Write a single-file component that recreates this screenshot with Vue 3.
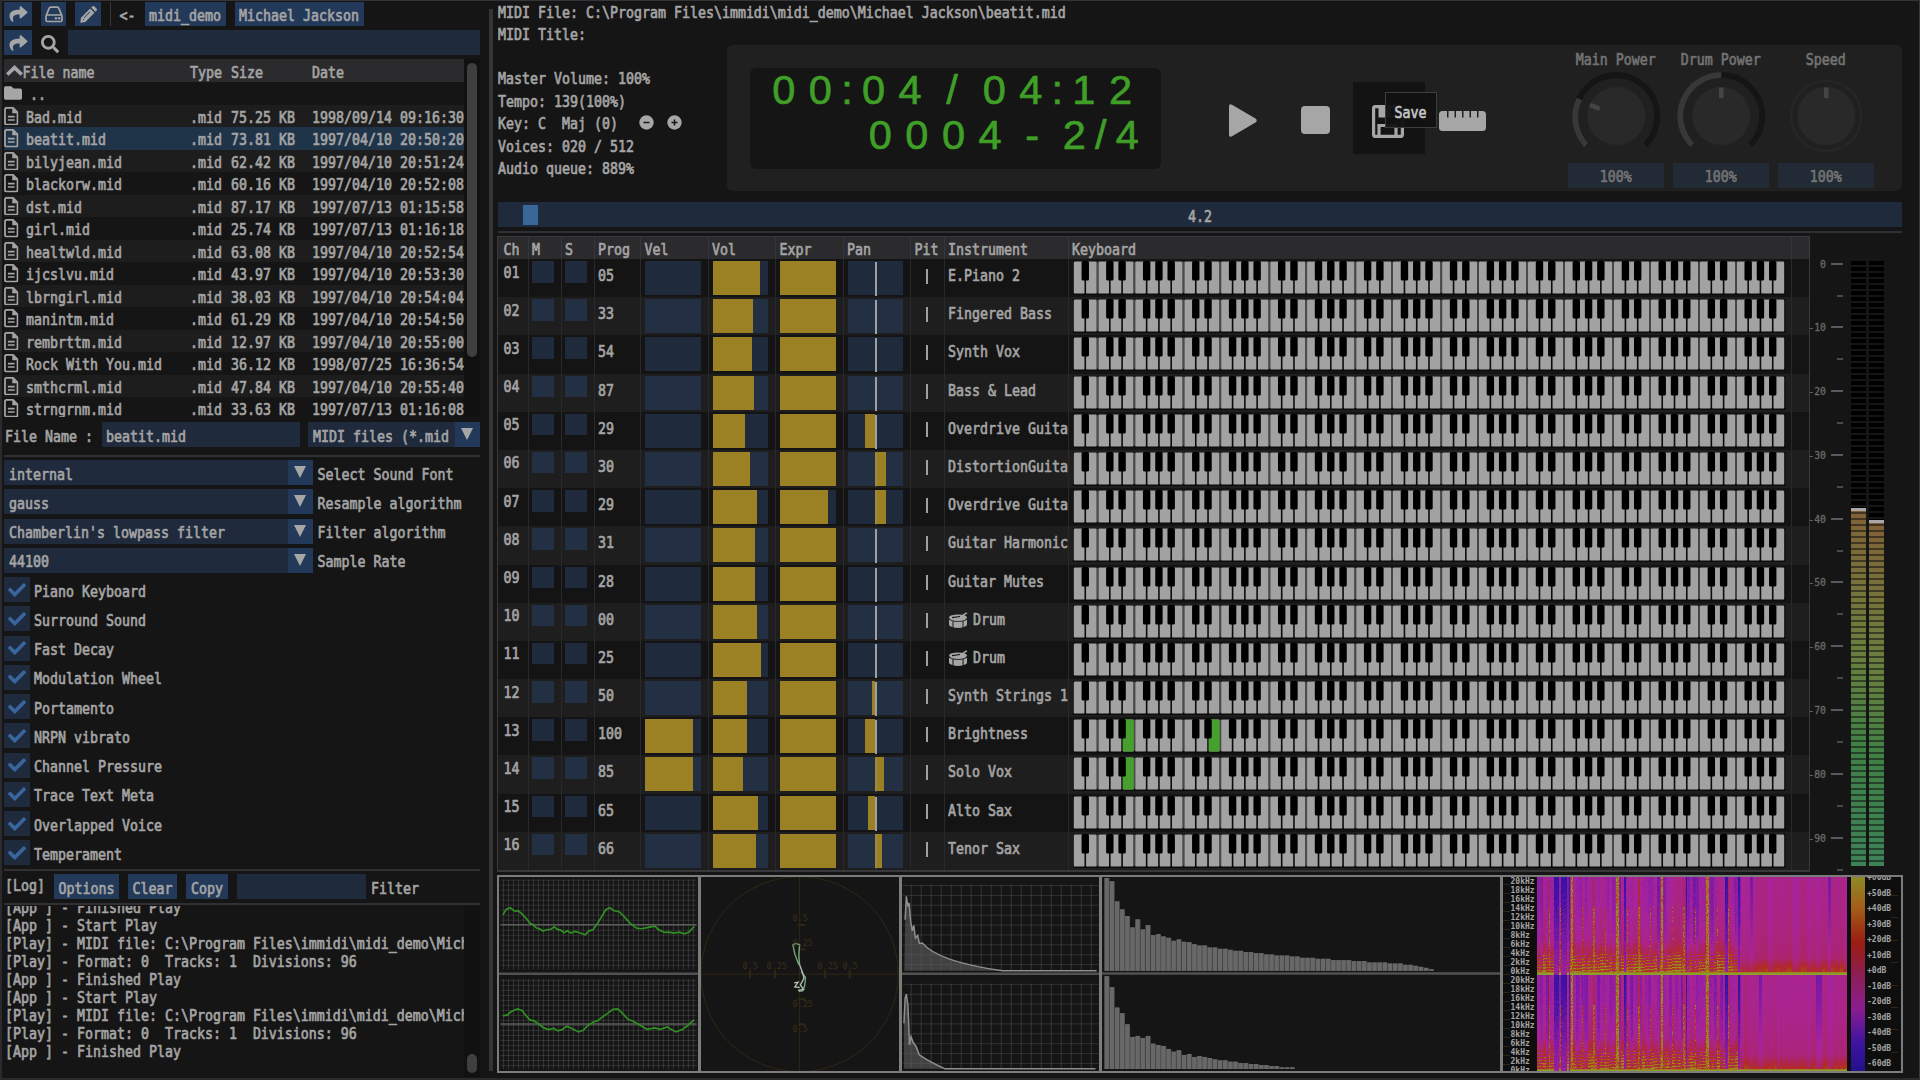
<script setup>
import { h, ref, onMounted } from 'vue'

const T = (props, { slots }) => h('span', { class: 't' }, slots.default && slots.default())

const files = [
  ['Bad.mid', '75.25 KB', '1998/09/14 09:16:30'],
  ['beatit.mid', '73.81 KB', '1997/04/10 20:50:20'],
  ['bilyjean.mid', '62.42 KB', '1997/04/10 20:51:24'],
  ['blackorw.mid', '60.16 KB', '1997/04/10 20:52:08'],
  ['dst.mid', '87.17 KB', '1997/07/13 01:15:58'],
  ['girl.mid', '25.74 KB', '1997/07/13 01:16:18'],
  ['healtwld.mid', '63.08 KB', '1997/04/10 20:52:54'],
  ['ijcslvu.mid', '43.97 KB', '1997/04/10 20:53:30'],
  ['lbrngirl.mid', '38.03 KB', '1997/04/10 20:54:04'],
  ['manintm.mid', '61.29 KB', '1997/04/10 20:54:50'],
  ['rembrttm.mid', '12.97 KB', '1997/04/10 20:55:00'],
  ['Rock With You.mid', '36.12 KB', '1998/07/25 16:36:54'],
  ['smthcrml.mid', '47.84 KB', '1997/04/10 20:55:40'],
  ['strngrnm.mid', '33.63 KB', '1997/07/13 01:16:08'],
]
const combos = [
  ['internal', 'Select Sound Font'],
  ['gauss', 'Resample algorithm'],
  ["Chamberlin's lowpass filter", 'Filter algorithm'],
  ['44100', 'Sample Rate'],
]
const checks = ['Piano Keyboard', 'Surround Sound', 'Fast Decay', 'Modulation Wheel', 'Portamento', 'NRPN vibrato', 'Channel Pressure', 'Trace Text Meta', 'Overlapped Voice', 'Temperament']
const midiLine = '[Play] - MIDI file: C:\\Program Files\\immidi\\midi_demo\\Mich'
const fmtLine = '[Play] - Format: 0  Tracks: 1  Divisions: 96'
const log = ['[App ] - Finished Play', '[App ] - Start Play', midiLine, fmtLine, '[App ] - Finished Play', '[App ] - Start Play', midiLine, fmtLine, '[App ] - Finished Play']
const info = ['Master Volume: 100%', 'Tempo: 139(100%)', 'Key: C  Maj (0)', 'Voices: 020 / 512', 'Audio queue: 889%']

const glyphs = (s, gap) => [...s].map((c) => ({ c, w: c === ':' ? 16.5 : c === '/' ? gap : c === '-' ? 47.5 : 36.6 }))
const lcd1 = glyphs('00:04/04:12', 47.5)
const lcd2 = glyphs('0004-2/4', 16.5)

const knobs = [
  { name: 'Main Power', tick: -67, arc: 'M18.4 74.1A41 41 0 0 1 11.4 28' },
  { name: 'Drum Power', tick: 0, arc: 'M19.3 74A41 41 0 0 1 48.3 4' },
  { name: 'Speed', tick: 0, arc: null },
]

// [program, velocity, volume, expression, pan, instrument, pressed keys]
const channels = [
  ['05', 0, 0.855, 1, 0, 'E.Piano 2', []],
  ['33', 0, 0.735, 1, 0, 'Fingered Bass', []],
  ['54', 0, 0.71, 1, 0, 'Synth Vox', []],
  ['87', 0, 0.755, 1, 0, 'Bass & Lead', []],
  ['29', 0, 0.59, 1, -0.19, 'Overdrive Guita', []],
  ['30', 0, 0.67, 1, 0.19, 'DistortionGuita', []],
  ['29', 0, 0.81, 0.86, 0.2, 'Overdrive Guita', []],
  ['31', 0, 0.77, 1, 0, 'Guitar Harmonic', []],
  ['28', 0, 0.77, 1, 0, 'Guitar Mutes', []],
  ['00', 0, 0.81, 1, 0, 'Drum', []],
  ['25', 0, 0.87, 1, 0, 'Drum', []],
  ['50', 0, 0.63, 1, -0.05, 'Synth Strings 1', []],
  ['100', 0.86, 0.63, 1, -0.19, 'Brightness', [4, 11]],
  ['85', 0.86, 0.55, 1, 0.165, 'Solo Vox', [4]],
  ['65', 0, 0.82, 1, -0.13, 'Alto Sax', []],
  ['66', 0, 0.775, 1, 0.125, 'Tenor Sax', []],
].map((r, i) => ({ ch: String(i + 1).padStart(2, '0'), prog: r[0], vel: r[1], vol: r[2], expr: r[3], pan: r[4], inst: r[5], keys: r[6] }))
const heads = ['Ch', 'M', 'S', 'Prog', 'Vel', 'Vol', 'Expr', 'Pan', 'Pit', 'Instrument', 'Keyboard', '']

const KEY = 712 / 58
const whites = Array.from({ length: 58 }, (_, i) => i)
// keys start at A: a gap without a black key falls after every B and E
const blacks = whites.filter((i) => i > 0 && ![2, 5].includes(i % 7))

const scale = Array.from({ length: 10 }, (_, i) => (i ? `-${i * 10}` : '0'))
const khz = Array.from({ length: 11 }, (_, i) => `${20 - i * 2}kHz`)
const db = Array.from({ length: 13 }, (_, i) => { const v = 60 - i * 10; return `${v >= 0 ? '+' : ''}${v}dB` })

const bars1 = [278, 268, 208, 184, 164, 130, 154, 124, 137, 107, 110, 103, 99, 90, 94, 87, 86, 80, 76, 76, 70, 70, 66, 66, 63, 60, 60, 56, 56, 53, 53, 49, 49, 46, 46, 46, 43, 43, 39, 39, 39, 36, 36, 36, 32, 32, 32, 32, 29, 29, 29, 25, 25, 25, 25, 22, 22, 22, 18, 18, 15, 12, 9, 5]
const bars2 = [278, 245, 184, 167, 134, 96, 99, 93, 99, 76, 72, 69, 60, 52, 56, 42, 45, 36, 39, 36, 33, 29, 26, 26, 22, 22, 18, 18, 15, 15, 12, 12, 9, 9, 5, 5, 5]

const canvas = ref(null)
const stops = [[0, 34, 16, 160], [0.2, 60, 18, 165], [0.38, 130, 26, 165], [0.5, 168, 36, 156], [0.62, 172, 36, 110], [0.74, 178, 40, 40], [0.84, 172, 70, 28], [0.93, 160, 130, 30], [1.1, 138, 160, 44]]
function color(v) {
  v = Math.max(0, Math.min(1.09, v))
  let i = 1
  while (stops[i][0] < v) i++
  const a = stops[i - 1], b = stops[i], f = (v - a[0]) / (b[0] - a[0])
  return [1, 2, 3].map((k) => a[k] + (b[k] - a[k]) * f)
}
onMounted(() => {
  const W = 310, H = 195
  const ctx = canvas.value.getContext('2d')
  const img = ctx.createImageData(W, H)
  let s = 7
  const rnd = () => ((s = (s * 1664525 + 1013904223) >>> 0) / 4294967296)
  for (const [y0, y1] of [[0, 98], [98, 195]]) {
    let slow = 0
    for (let x = 0; x < W; x++) {
      const right = x > 203
      if (x % 3 === 0) slow = rnd() - 0.5
      const jit = (rnd() - 0.5) * 0.05
      const strong = [34, 35, 79, 80, 81, 124, 125, 169, 170, 171].includes(x)
      const weak = [12, 56, 57, 101, 102, 146, 147, 191].includes(x)
      const minor = [23, 45, 68, 90, 113, 135, 158, 180].includes(x)
      const blue = (x > 16 && x < 33 && x % 8 < 6) || (!right && [87, 88, 149, 188, 189, 190].includes(x)) || x === 201 || x === 202
      for (let y = y0; y < y1; y++) {
        const t = (y - y0) / (y1 - y0)
        let v
        if (right) {
          v = 0.53 + slow * 0.08 + jit * 0.6 + 0.09 * t * t + Math.max(0, t - 0.82) * (0.95 + slow * 0.8)
          if (slow < -0.42) v -= 0.14 * (1 - t)
          v += (rnd() - 0.5) * 0.015
        } else {
          v = 0.46 + slow * 0.2 + jit + (rnd() - 0.5) * 0.08 + 0.18 * t * t
          if (t > 0.66) v += (t - 0.66) * 0.6 + (rnd() > 0.7 ? 0.08 : 0)
          if (t > 0.78) v += 0.13 * Math.sin(y * 2.1 + Math.floor(x / 9) * 1.3)
          if (blue) v = Math.min(v, 0.1 + t * 0.3 + rnd() * 0.12)
          if (weak) v = Math.max(v, 0.58 + (t > 0.3 ? 0.18 : 0) + rnd() * 0.18)
          if (minor && t > 0.3) v = Math.max(v, 0.58 + rnd() * 0.36)
          if (strong) v = 0.8 + rnd() * 0.25
        }
        if (y >= y1 - 3 && !(blue && x < 36)) v = y === y1 - 3 ? 0.92 : 1.09
        const c = color(v), o = (y * W + x) * 4
        img.data[o] = c[0]; img.data[o + 1] = c[1]; img.data[o + 2] = c[2]; img.data[o + 3] = 255
      }
    }
  }
  ctx.putImageData(img, 0, 0)
})
</script>

<template>
  <div class="app">
    <svg width="0" height="0" class="defs">
      <symbol id="share" viewBox="0 0 512 512"><path d="M503.691 189.836L327.687 37.851C312.281 24.546 288 35.347 288 56.015v80.053C127.371 137.907 0 170.1 0 322.326c0 61.441 39.581 122.309 83.333 154.132 13.653 9.931 33.111-2.533 28.077-18.631C66.066 312.814 132.917 274.316 288 272.085V360c0 20.7 24.3 31.453 39.687 18.164l176.004-152c11.071-9.562 11.086-26.753 0-36.328z" /></symbol>
      <symbol id="check" viewBox="0 0 512 512"><path d="M173.898 439.404l-166.4-166.4c-9.997-9.997-9.997-26.206 0-36.204l36.203-36.204c9.997-9.998 26.207-9.998 36.204 0L192 312.69 432.095 72.596c9.997-9.997 26.207-9.997 36.204 0l36.203 36.204c9.997 9.997 9.997 26.206 0 36.204l-294.4 294.401c-9.998 9.997-26.207 9.997-36.204-.001z" /></symbol>
      <symbol id="search" viewBox="0 0 512 512"><path d="M505 442.7L405.3 343c-4.5-4.5-10.6-7-17-7H372c27.6-35.3 44-79.7 44-128C416 93.1 322.9 0 208 0S0 93.1 0 208s93.1 208 208 208c48.3 0 92.7-16.4 128-44v16.3c0 6.4 2.5 12.5 7 17l99.7 99.7c9.4 9.4 24.6 9.4 33.9 0l28.3-28.3c9.4-9.4 9.4-24.6.1-34zM208 336c-70.7 0-128-57.2-128-128 0-70.7 57.2-128 128-128 70.7 0 128 57.2 128 128 0 70.7-57.2 128-128 128z" /></symbol>
      <symbol id="file" viewBox="0 0 14 18"><path fill="none" stroke="#a6a6a6" stroke-width="1.7" stroke-linejoin="round" d="M2.2 .9h6.6l4.3 4.3v10.6q0 1.3-1.3 1.3H2.2Q.9 17.1.9 15.8V2.2Q.9.9 2.2.9z" /><path d="M8 1v5h5.200zM3.700 8.600h6.600v1.500H3.700zM3.700 11.900h6.600v1.500H3.700z" /></symbol>
      <symbol id="folder" viewBox="0 64 512 384"><path d="M464 128H272l-64-64H48C21.49 64 0 85.49 0 112v288c0 26.51 21.49 48 48 48h416c26.51 0 48-21.49 48-48V176c0-26.51-21.49-48-48-48z" /></symbol>
      <g id="octaves">
        <rect v-for="i in whites" :key="'w' + i" :x="i * KEY + 0.8" y=".6" :width="KEY - 1.6" height="32" rx="1.200" fill="#a2a2a2" />
        <rect v-for="i in whites.filter((n) => [2, 5].includes(n % 7))" :key="'g' + i" :x="i * KEY - 0.8" y=".6" width="1.6" height="31" fill="#4a4a4a" />
      </g>
      <g id="sharps"><rect v-for="i in blacks" :key="i" :x="i * KEY - 3.7" y="0" width="7.400" height="19.500" rx="1.500" fill="#000" /></g>
    </svg>

    <aside class="side">
      <div class="bar toolbar">
        <div class="btn" style="width: 28px"><svg width="19" height="18"><use href="#share" /></svg></div>
        <div class="btn" style="width: 25px">
          <svg width="18" height="17" viewBox="0 0 18 17"><path class="line" d="M1 10 4 2.600Q4.500 1.200 6 1.200h6q1.500 0 2 1.400l3 7.400M2.500 9h13Q17 9 17 10.500v3.500q0 1.500-1.500 1.500h-13Q1 15.500 1 14v-3.500Q1 9 2.500 9z" /><circle cx="11" cy="12.300" r="1.200" /><circle cx="14.200" cy="12.300" r="1.200" /></svg>
        </div>
        <div class="btn" style="width: 26px">
          <svg width="17" height="17" viewBox="0 0 17 17"><path d="M10.200 2.500 14.500 6.800 5.300 16 .8 16.700Q.2 16.800.3 16.200L1 11.700zM11.200 1.500l.9-.9q1.200-1.100 2.400 0l1.900 1.900q1.100 1.200 0 2.400l-.9.9z" /><path d="M4 11.800l6-6M3 13l1 1" stroke="#24395a" stroke-width="1" /></svg>
        </div>
        <i class="vsep"></i>
        <T>&lt;-</T>
        <div class="btn crumb"><T>midi_demo</T></div>
        <div class="btn crumb2"><T>Michael Jackson</T></div>
      </div>
      <div class="bar search">
        <div class="btn" style="width: 28px"><svg width="19" height="18"><use href="#share" /></svg></div>
        <svg class="glass" width="18" height="18"><use href="#search" /></svg>
        <div class="field grow"></div>
      </div>

      <div class="browser">
        <div class="list">
          <div class="row head"><span class="name"><svg width="17" height="11" viewBox="0 0 17 11"><path d="M8.500 0 17 8.200 14.500 10.800 8.500 5.200 2.500 10.800 0 8.200z" /></svg><T>File name</T></span><T>Type</T><T>Size</T><T>Date</T></div>
          <div class="row up"><span class="name"><svg width="18" height="14"><use href="#folder" /></svg><T>..</T></span></div>
          <div v-for="(f, i) in files" :key="f[0]" class="row" :class="{ odd: i % 2 === 0, sel: i === 1 }">
            <span class="name file"><svg width="14.500" height="18.500"><use href="#file" /></svg><T>{{ f[0] }}</T></span>
            <T>.mid</T><T>{{ f[1] }}</T><T>{{ f[2] }}</T>
          </div>
        </div>
        <div class="track"><i class="thumb"></i></div>
      </div>

      <div class="bar fname">
        <T>File Name :</T>
        <div class="field fn"><T>beatit.mid</T></div>
        <div class="field combo ft"><T>MIDI files (*.mid</T><i class="drop"></i></div>
      </div>
      <hr />
      <div class="settings">
        <div v-for="c in combos" :key="c[0]" class="bar">
          <div class="field combo"><T>{{ c[0] }}</T><i class="drop"></i></div><T>{{ c[1] }}</T>
        </div>
        <div v-for="c in checks" :key="c" class="bar">
          <div class="check"><svg width="20" height="18"><use href="#check" /></svg></div><T>{{ c }}</T>
        </div>
      </div>
      <hr class="s2" />
      <div class="bar logbar">
        <T class="lg">[Log]</T>
        <div class="btn" style="width: 65px"><T>Options</T></div>
        <div class="btn" style="width: 49px"><T>Clear</T></div>
        <div class="btn" style="width: 42px"><T>Copy</T></div>
        <div class="field" style="width: 129px"></div>
        <T class="fl">Filter</T>
      </div>
      <hr class="s3" />
      <div class="log">
        <div class="lines"><div v-for="(l, i) in log" :key="i"><T>{{ l }}</T></div></div>
        <div class="track"><i class="thumb"></i></div>
      </div>
    </aside>

    <i class="splitter"></i>

    <main class="main">
      <div class="title"><T>MIDI File: C:\Program Files\immidi\midi_demo\Michael Jackson\beatit.mid</T></div>
      <div class="title"><T>MIDI Title:</T></div>
      <div class="deck">
        <div class="info">
          <div v-for="(l, i) in info" :key="l" class="title">
            <T>{{ l }}</T>
            <template v-if="i === 2">
              <svg class="pm" width="15" height="15" viewBox="0 0 15 15"><circle cx="7.500" cy="7.500" r="7.200" /><path d="M4.500 7.500h6" stroke="#151515" stroke-width="1.500" /></svg>
              <svg class="pm2" width="15" height="15" viewBox="0 0 15 15"><circle cx="7.500" cy="7.500" r="7.200" /><path d="M4.500 7.500h6M7.500 4.500v6" stroke="#151515" stroke-width="1.500" /></svg>
            </template>
          </div>
        </div>
        <div class="panel">
          <div class="lcd">
            <div class="digits"><span v-for="(g, i) in lcd1" :key="i" :style="{ width: g.w + 'px' }">{{ g.c }}</span></div>
            <div class="digits second"><span v-for="(g, i) in lcd2" :key="i" :style="{ width: g.w + 'px' }">{{ g.c }}</span></div>
          </div>
          <svg class="play" width="28" height="33" viewBox="0 0 28 33"><path d="M0 2.500Q0-1 3 .8L26.500 14.500q2.500 2 0 4L3 32.200Q0 34 0 30.500z" /></svg>
          <svg class="stop" width="29" height="28"><rect width="29" height="28" rx="4" /></svg>
          <div class="save">
            <svg width="32" height="33" viewBox="0 0 32 33"><path class="line" style="stroke-width: 3.2px" d="M3 1.600h20l7.400 7v20.800q0 2-2 2H3.600q-2 0-2-2V3.600q0-2 1.400-2zM7 31V20.500h17V31" /><path d="M6.500 2H24v10.500H6.500zM19 4v6h3V4z" fill-rule="evenodd" /></svg>
            <div class="tip"><T>Save</T></div>
          </div>
          <svg class="ruler" width="47" height="20" viewBox="0 0 47 20"><path d="M3.500 0H8v6.500h1.500V0h6v6.500H17V0h6v6.500h1.500V0h6v6.500H32V0h6v6.500h1.500V0h4Q47 0 47 3.500v13Q47 20 43.500 20h-40Q0 20 0 16.500v-13Q0 0 3.500 0z" /></svg>
          <div class="knobs">
            <div v-for="k in knobs" :key="k.name" class="knob">
              <T>{{ k.name }}</T>
              <svg width="96.500" height="90" viewBox="0 0 96.500 90">
                <template v-if="k.arc">
                  <path d="M19.300 74A41 41 0 1 1 77.300 74" fill="none" stroke="#151515" stroke-width="6" />
                  <path :d="k.arc" fill="none" stroke="#383838" stroke-width="6" />
                </template>
                <circle v-else cx="48.300" cy="45" r="35" fill="none" stroke="#272727" stroke-width="2" />
                <circle cx="48.300" cy="45" r="29" fill="#292929" />
                <rect x="46" y="16.500" width="4.600" height="10.500" fill="#454545" :transform="`rotate(${k.tick} 48.3 45)`" />
              </svg>
              <div class="pct"><T>100%</T></div>
            </div>
          </div>
        </div>
      </div>

      <div class="seek"><i></i><T>4.2</T></div>
      <hr class="s4" />

      <div class="mid">
        <div class="mixer">
          <div class="chrow chhead"><div v-for="(t, i) in heads" :key="i"><T>{{ t }}</T></div></div>
          <div v-for="(c, i) in channels" :key="i" class="chrow" :class="{ alt: i % 2 }">
            <div class="chno"><T>{{ c.ch }}</T></div>
            <div><i class="tog"></i></div>
            <div><i class="tog"></i></div>
            <div><T class="val">{{ c.prog }}</T></div>
            <div><div class="meter"><i :style="{ width: c.vel * 100 + '%' }"></i></div></div>
            <div><div class="meter"><i :style="{ width: c.vol * 100 + '%' }"></i></div></div>
            <div><div class="meter"><i :style="{ width: c.expr * 100 + '%' }"></i></div></div>
            <div><div class="meter pan"><i :style="{ left: (0.5 + Math.min(0, c.pan)) * 100 + '%', width: Math.abs(c.pan) * 100 + '%' }"></i><b :style="{ opacity: c.pan > 0 ? 0.25 : 1 }"></b></div></div>
            <div class="pit"><i></i></div>
            <div class="inst">
              <svg v-if="c.inst === 'Drum'" width="20" height="17" viewBox="0 0 20 17"><path d="M1 5.500q0-2.500 7.500-3l6 .3L18.300.200l1 1.200-3 1.900Q19 4 19 5.500 18 9 10 9T1 5.500z" /><path d="M1 7.500q1.500 1.200 3.500 1.700V15Q1 14 1 12.500zM5.500 9.500q4.500.7 9 0v6q-4.500.8-9 0zM15.500 9.200Q18 8.500 19 7.500v5q0 1.500-3.500 2.500z" /><path d="M4 5.600 12 4.500" stroke="#151515" stroke-width="1.200" /></svg>
              <T class="val">{{ c.inst }}</T>
            </div>
            <div class="kb">
              <svg width="713" height="34">
                <rect width="712.500" height="34" fill="#0c0c0c" />
                <use href="#octaves" />
                <rect v-for="k in c.keys" :key="k" :x="k * KEY + 0.6" y=".6" :width="KEY - 1.200" height="32" rx="1.200" fill="#46a02d" />
                <use href="#sharps" />
              </svg>
            </div>
            <div></div>
          </div>
        </div>
        <div class="vu">
          <div class="ticks"><div v-for="s in scale" :key="s"><span>{{ s }}</span><i></i></div></div>
          <div class="col"><i style="height: 358.5px"></i></div>
          <div class="col"><i style="height: 346px"></i></div>
        </div>
      </div>

      <div class="scopes">
        <div class="scope split" style="width: 201.500px">
          <svg viewBox="24 37 502 581" preserveAspectRatio="none">
            <defs><pattern id="fine" width="12.640" height="15" patternUnits="userSpaceOnUse" x="34" y="45"><path d="M0 0V15M0 0H13" stroke="#5c5c5c" stroke-width="2.200" /></pattern></defs>
            <rect x="28" y="44" width="496" height="270" fill="url(#fine)" /><rect x="28" y="342" width="496" height="270" fill="url(#fine)" />
            <path class="hi" d="M28 180H524M28 477H524" />
            <path class="mid2" d="M20 327H530" />
            <polyline class="wave" points="34,150 42,134 52,129 58,134 65,140 72,138 80,145 92,160 102,175 110,180 118,189 128,193 135,199 145,195 154,194 164,186 172,194 180,196 188,204 197,198 206,205 216,200 228,204 242,210 251,199 262,194 272,178 284,155 294,135 304,129 315,138 328,141 340,155 355,175 372,190 384,192 402,188 418,184 427,194 442,203 455,202 466,205 480,202 493,207 505,202 512,192 518,185" />
            <polyline class="wave" points="34,453 45,450 55,440 71,432 82,437 92,452 102,465 113,468 125,478 137,489 150,494 162,490 173,498 184,494 195,484 207,490 225,501 237,496 248,482 262,472 274,467 287,455 300,444 312,433 325,432 337,446 349,462 364,470 380,480 398,493 418,489 432,493 450,486 460,494 472,501 487,494 499,484 508,474 518,465" />
          </svg>
        </div>
        <div class="scope" style="width: 201px">
          <svg viewBox="532 37 502 581" preserveAspectRatio="none">
            <ellipse cx="782" cy="328" rx="250" ry="292" class="dim" /><path class="dim" d="M782 37V618M532 328H1034" />
            <path class="dim" style="stroke-width: 2px" d="M656 315V341M720 315V341M846 315V341M909 315V341M777 181H796M777 254H796M777 402H796M777 478H796" />
            <path class="trace" d="M780 300 770 268 765 240 773 236 782 240 780 272 782 300M786 320 797 338 795 362 790 378 780 379" />
            <path class="trace w" d="M782 300 790 325 793 340 784 360 792 374 778 377M768 354 778 352 770 366 782 368" />
          </svg>
          <div class="marks"><span>0.5</span><span>0.25</span><span class="h">0.5</span><span class="h">0.25</span><span class="h">0.25</span><span class="h">0.5</span><span>0.25</span><span>0.5</span></div>
        </div>
        <div class="scope split" style="width: 200px">
          <svg viewBox="1040 37 500 581" preserveAspectRatio="none">
            <defs><pattern id="wide" width="25.400" height="29.600" patternUnits="userSpaceOnUse" x="1062" y="61"><path d="M0 0V30M0 0H26" stroke="#4a4a4a" stroke-width="3" /></pattern><pattern id="wide2" width="25.400" height="29.600" patternUnits="userSpaceOnUse" x="1062" y="357"><path d="M0 0V30M0 0H26" stroke="#4a4a4a" stroke-width="3" /></pattern></defs>
            <rect x="1042" y="60" width="496" height="258" fill="url(#wide)" /><rect x="1042" y="356" width="496" height="256" fill="url(#wide2)" />
            <path class="mid2" d="M1036 327H1542" />
            <path class="spec" d="M1046 318 1048 165 1051 95 1055 125 1058 115 1062 170 1066 198 1070 182 1074 220 1080 212 1084 236 1092 235Q1130 290 1295 318z" />
            <path class="sline" d="M1048 165 1051 95 1055 125 1058 115 1062 170 1066 198 1070 182 1074 220 1080 212 1084 236 1092 235Q1130 290 1295 318H1534" />
            <path class="spec" d="M1045 611 1045 475 1048 400 1051 388 1055 420 1059 540 1063 515 1068 532 1076 545 1084 570Q1108 590 1148 611z" />
            <path class="sline" d="M1045 475 1048 400 1051 388 1055 420 1059 540 1063 515 1068 532 1076 545 1084 570Q1108 590 1148 611H1531" />
          </svg>
        </div>
        <div class="scope split" style="width: 401px">
          <svg viewBox="34 37 1198 581" preserveAspectRatio="none">
            <path class="mid2" d="M30 326H1232" />
            <g v-for="(set, n) in [bars1, bars2]" :key="n"><rect v-for="(b, i) in set" :key="i" :x="41 + i * 15.5" :y="(n ? 612 : 318) - b" width="15.500" :height="b" fill="#505050" /><rect v-for="(b, i) in set" :key="'l' + i" :x="42 + i * 15.5" :y="(n ? 612 : 318) - b" width="12.500" :height="b" fill="#686868" /></g>
          </svg>
        </div>
        <div class="scope sg">
          <i class="dashes"></i>
          <div class="khz"><div><span v-for="k in khz" :key="k">{{ k }}</span></div><div><span v-for="k in khz" :key="k">{{ k }}</span></div></div>
          <canvas ref="canvas" width="310" height="195"></canvas>
          <i class="ramp"></i>
          <div class="db"><span v-for="d in db" :key="d">{{ d }}</span></div>
          <i class="dashes r"></i>
        </div>
      </div>
    </main>
  </div>
</template>

<style>
html, body { margin: 0; background: #151515; overflow: hidden; }
</style>

<style scoped>
* { box-sizing: border-box; }
.app { width: 1920px; height: 1080px; display: flex; overflow: hidden; background: #151515; border-top: 1px solid #333338; border-left: 2px solid #2a2a2f; border-right: 1px solid #3a3a3c; border-bottom: 2px solid #2a2a2f; font: 13.290px "DejaVu Sans Mono", "Liberation Mono", monospace; color: #a4a4a4; }
svg { fill: #a6a6a6; display: block; flex: none; }
.defs { position: absolute; }
.line { fill: none; stroke: #a6a6a6; stroke-width: 1.700px; }
.t { display: inline-block; white-space: pre; line-height: 18px; transform: translateY(2.300px) scaleY(1.130); -webkit-text-stroke: 0.600px currentColor; flex: none; }
hr { border: 0; height: 2px; background: #303034; margin: 8px 0 3px; flex: none; }
i { display: block; flex: none; }

.side { width: 478px; padding: 1px 0 0 2px; display: flex; flex-direction: column; flex: none; }
.bar { display: flex; align-items: center; height: 25px; flex: none; }
.btn { height: 25px; background: #23395a; display: flex; align-items: center; justify-content: center; flex: none; }
.field { height: 25px; background: #1f2a3d; display: flex; align-items: center; padding-left: 5px; flex: none; overflow: hidden; }
.grow { flex: 1; }
.toolbar .btn { margin-right: 9px; height: 24px; }
.toolbar { height: 24px; }
.toolbar .vsep { width: 1px; height: 24px; background: #38383a; margin-right: 8.500px; }
.toolbar .crumb { width: 81px; margin-left: 9px; }
.crumb2 { width: 129px; }
.search { margin-top: 4px; }
.glass { margin: 3px 9px 0 9px; }
.browser { display: flex; height: 358px; margin-top: 4px; overflow: hidden; flex: none; }
.list { width: 460px; overflow: hidden; }
.row { display: grid; grid-template-columns: 186px 41px 81px 1fr; align-items: center; height: 22.500px; }
.row.head { background: #2b2b2d; height: 23px; }
.row.odd { background: #1d1d1d; }
.row.sel { background: #1f3349; }
.name { display: flex; align-items: center; gap: 4px; }
.head .name { gap: 0; padding-left: 1.500px; }
.up .name { gap: 8px; }
.name.file { gap: 7.500px; }
.track { width: 16px; background: #111; padding: 4px 3px; }
.thumb { width: 10px; height: 294px; border-radius: 5px; background: #3f3f3f; }
.fname { margin-top: 5px; padding-left: 1px; }
.fn { width: 198px; margin: 0 8px 0 9px; padding-left: 4px; }
.combo { width: 309px; justify-content: space-between; margin-right: 4.500px; }
.ft { width: 172px; margin: 0; }
.drop { width: 25px; height: 25px; background: #23395a; position: relative; }
.drop::after { content: ""; position: absolute; left: 6px; top: 6px; border: 6.500px solid transparent; border-top: 12px solid #a6a6a6; border-bottom: 0; }
.settings { display: flex; flex-direction: column; gap: 4.250px; }
.check { width: 26px; height: 25px; background: #1f2a3d; display: flex; align-items: center; justify-content: center; margin-right: 4px; }
.check svg { fill: #3a669f; }
.s2 { margin: 4px 0 3px; }
.s3 { margin: 4px 0 1px; }
.logbar { padding-left: 1px; gap: 9px; }
.lg { margin-top: -6px; }
.fl { margin-left: -4px; }
.log { display: flex; height: 171px; overflow: hidden; flex: none; }
.log .lines { width: 460px; overflow: hidden; padding-left: 1px; }
.lines > div { height: 18px; position: relative; top: -9px; display: flex; }
.log .track { padding-top: 148px; }
.log .thumb { height: 19px; }
.splitter { width: 4px; height: 1062px; margin: 8px 5px 0 9px; background: #333338; }

.main { width: 1404px; display: flex; flex-direction: column; flex: none; }
.title { height: 22.500px; display: flex; align-items: center; flex: none; position: relative; top: -.700px; }
.title:first-child { margin-top: -1px; }
.deck { display: flex; margin-top: 0; height: 147px; flex: none; }
.info { width: 229px; padding-top: 21.500px; }
.info .title:first-child { margin-top: 0; }
.pm { margin-left: 21px; } .pm2 { margin-left: 13px; }
.panel { width: 1175px; height: 146px; background: #202020; border-radius: 6px; display: flex; align-items: center; margin-top: 0; }
.lcd { width: 411px; height: 101px; margin-left: 23px; background: #151515; border-radius: 6px; padding: 0 0 0 15.500px; overflow: hidden; }
.digits { display: flex; height: 45px; font: 41.500px "Liberation Sans", sans-serif; line-height: 44.500px; color: #3f9f27; -webkit-text-stroke: .7px #3f9f27; }
.digits span { text-align: center; flex: none; }
.second { padding-left: 96.500px; }
.play { margin: 4px 0 0 67.500px; } .stop { margin: 4px 0 0 44.500px; } .ruler { margin: 5px 0 0 13.500px; }
.save { width: 72.500px; height: 72px; margin-left: 22.500px; background: #131313; display: flex; align-items: center; padding: 6px 0 0 19.500px; position: relative; }
.tip { position: absolute; left: 32px; top: 10px; width: 52px; height: 36px; background: rgba(18, 18, 18, 0.960); border: 1px solid #3d3d3d; padding: 9px 0 0 9px; line-height: 18px; color: #c4c4c4; }
.knobs { display: flex; gap: 8.500px; margin: -2px 0 0 82px; }
.knob { width: 96.500px; display: flex; flex-direction: column; align-items: center; color: #727272; padding-top: 2px; }
.knob > svg { margin-top: 4px; }
.pct { width: 96.500px; height: 25px; background: #212a35; display: flex; align-items: center; justify-content: center; margin-top: 2px; }
.seek { height: 25px; margin-top: 10px; background: #1f2a3d; position: relative; display: flex; align-items: center; justify-content: center; flex: none; }
.seek i { position: absolute; left: 25px; top: 3px; width: 15px; height: 20px; background: #3b6698; }
.s4 { margin: 4px 0 3px; }
.mid { display: flex; height: 636px; flex: none; }
.mixer { width: 1313px; margin-left: -1px; border: 1px solid #3a3a3d; border-bottom: 2px solid #38383c; flex: none; }
.chrow { display: grid; grid-template-columns: 29.500px 33px 33px 46.500px 67.500px 67.500px 67.500px 67.500px 33.500px 124px 723px 1fr; height: 38.190px; background: #141414; }
.chrow.alt { background: #1e1e1e; }
.chrow > div { border-left: 1px solid #29292c; padding-left: 3.500px; overflow: hidden; display: flex; align-items: flex-start; min-width: 0; }
.chrow > div:first-child { border-left: 0; padding-left: 5.500px; }
.chhead { height: 22px; background: #2b2b2d; }
.chhead > div { align-items: center; border-left-color: #36363a; }
.alt .tog, .alt .meter { background: #232f42; }
.chno { padding-top: 2.500px; }
.tog { width: 22px; height: 21.500px; margin-top: 2px; background: #1f2a3d; }
.val { margin-top: 6px; }
.meter { width: 55.500px; height: 34px; margin: 2px 0 0 .500px; background: #1f2a3d; position: relative; }
.meter i { height: 34px; background: #9b8024; }
.pan i { position: absolute; top: 0; }
.pan b { position: absolute; left: 27px; top: 1px; width: 2px; height: 34px; background: #a0a0a0; }
.pit i { width: 2px; height: 15px; background: #a0a0a0; margin: 10px 0 0 11px; }
.inst svg { margin: 9px 5px 0 0; }
.kb svg { margin: 2px 0 0 .500px; }

.vu { display: flex; width: 92px; flex: none; }
.ticks { width: 33px; padding-top: 19.500px; margin-right: 8px; }
.ticks div { height: 63.800px; display: flex; align-items: flex-start; justify-content: flex-end; position: relative; }
.ticks span { font-size: 9.800px; line-height: 16px; margin-right: 5px; transform: translateY(1px) scaleY(1.080); color: #696969; -webkit-text-stroke: 0.300px; }
.ticks i { width: 12px; height: 2px; background: #5a5a5a; margin-top: 7px; }
.ticks div::after { content: ""; position: absolute; right: 0; top: 39px; width: 6px; height: 2px; background: #4a4a4a; }
.col { width: 14.500px; height: 605px; margin: 25px 3.500px 0 0; display: flex; flex-direction: column; justify-content: flex-end; background: repeating-linear-gradient(#000 0 4px, #151515 4px 6px); position: relative; }
.col i { background: repeating-linear-gradient(transparent 0 4px, rgba(15, 15, 15, .550) 4px 6px), linear-gradient(#816037, #76743a 80px, #687f3e 150px, #3f8046 240px, #3d8257); border-top: 3px solid #a8a8a8; background-origin: border-box; }

.scopes { display: flex; width: 1406px; height: 198px; margin: 3px 0 0 -1px; border: 2px solid #7c7c7c; flex: none; }
.scope { border-right: 3px solid #7c7c7c; height: 194px; position: relative; flex: none; overflow: hidden; }
.scope > svg { width: 100%; height: 100%; }
.scope path, .scope polyline, .scope ellipse { vector-effect: non-scaling-stroke; }
pattern path { vector-effect: none !important; }
.mid2 { stroke: #515151; stroke-width: 2.500px; }
.hi { stroke: #5c5c5c; stroke-width: 1.500px; }
.wave { fill: none; stroke: #2f9022; stroke-width: 1.700px; }
.dim { fill: none; stroke: #302713; stroke-width: 1px; }
.trace { fill: none; stroke: #75a87c; stroke-width: 1.400px; }
.trace.w { stroke: #aebcb0; }
.spec { fill: rgba(95, 95, 95, .600); }
.sline { fill: none; stroke: #8e8e8e; stroke-width: 1.500px; }
.marks { position: absolute; inset: 0; font-size: 8.500px; line-height: 10px; color: #3a2e16; }
.marks span { position: absolute; left: 92px; }
.marks span:nth-child(1) { top: 36px; } .marks span:nth-child(2) { top: 61px; } .marks span:nth-child(7) { top: 122px; } .marks span:nth-child(8) { top: 147px; }
.marks .h { top: 84px; }
.marks span:nth-child(3) { left: 42px; } .marks span:nth-child(4) { left: 66px; } .marks span:nth-child(5) { left: 117px; } .marks span:nth-child(6) { left: 142px; }
.sg { flex: 1; border: 0; display: flex; background: #0e0e0e; }
.dashes { width: 7px; height: 194px; background: repeating-linear-gradient(transparent 0 7px, #2c2612 7px 8px, transparent 8px 9px); }
.dashes.r { background: repeating-linear-gradient(transparent 0 18px, #2c2612 18px 19px, transparent 19px 22.400px); }
.khz { width: 27px; padding-left: 1px; font: bold 8px/9px "DejaVu Sans Mono", monospace; }
.khz > div { height: 99px; display: flex; flex-direction: column; }
.khz span, .db span { display: block; height: 9px; }
canvas { width: 310px; height: 195px; flex: none; }
.ramp { width: 14.500px; height: 194px; margin-left: 4px; background: linear-gradient(#8e8a26, #a35d18 16%, #9a1c12 34%, #8c1f58 52%, #8a1d90 68%, #3c14a0 86%, #24108c); }
.db { width: 26px; padding-left: 2px; font: bold 8px/9px "DejaVu Sans Mono", monospace; }
.db span { height: 15.500px; position: relative; top: -4px; }
</style>
